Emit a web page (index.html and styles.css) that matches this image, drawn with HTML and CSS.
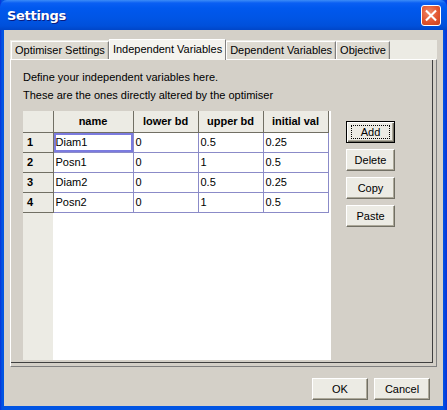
FILE: index.html
```html
<!DOCTYPE html>
<html>
<head>
<meta charset="utf-8">
<link rel="stylesheet" href="styles.css">
</head>
<body>
<div class="window">
  <div class="titlebar">
    <span class="title">Settings</span>
    <div class="close">
      <svg width="21" height="21" viewBox="0 0 21 21">
        <path d="M6 6 L15 15 M15 6 L6 15" stroke="#fff" stroke-width="2.2" stroke-linecap="square"/>
      </svg>
    </div>
  </div>
  <div class="client">
    <div class="tabctl">
      <div class="tabs">
        <div class="tab">Optimiser Settings</div>
        <div class="tab active">Independent Variables</div>
        <div class="tab">Dependent Variables</div>
        <div class="tab">Objective</div>
      </div>
      <div class="page">
        <div class="inner">
          <p class="line">Define your independent variables here.</p>
          <p class="line">These are the ones directly altered by the optimiser</p>
          <div class="content">
            <div class="grid">
              <table>
                <thead>
                  <tr><th class="corner"></th><th class="c-name">name</th><th class="c-num">lower bd</th><th class="c-num">upper bd</th><th class="c-num">initial val</th></tr>
                </thead>
                <tbody>
                  <tr><th>1</th><td class="sel">Diam1</td><td>0</td><td>0.5</td><td>0.25</td></tr>
                  <tr><th>2</th><td>Posn1</td><td>0</td><td>1</td><td>0.5</td></tr>
                  <tr><th>3</th><td>Diam2</td><td>0</td><td>0.5</td><td>0.25</td></tr>
                  <tr><th>4</th><td>Posn2</td><td>0</td><td>1</td><td>0.5</td></tr>
                </tbody>
              </table>
            </div>
            <div class="side">
              <button class="btn default"><span class="focus">Add</span></button>
              <button class="btn">Delete</button>
              <button class="btn">Copy</button>
              <button class="btn">Paste</button>
            </div>
          </div>
        </div>
      </div>
    </div>
    <div class="footer">
      <button class="btn wide">OK</button>
      <button class="btn wide">Cancel</button>
    </div>
  </div>
</div>
</body>
</html>
```

FILE: styles.css
```css
* { box-sizing: border-box; }
html, body { margin: 0; padding: 0; }
body {
  width: 447px;
  height: 410px;
  overflow: hidden;
  font-family: "Liberation Sans", Arial, sans-serif;
  font-size: 11px;
  color: #000;
}
.window {
  width: 447px;
  height: 410px;
  background: linear-gradient(to right, #0831d9 0, #0054e3 2px, #0054e3 443px, #0831d9 447px);
  display: flex;
  flex-direction: column;
}
.titlebar {
  height: 30px;
  flex: none;
  display: flex;
  align-items: center;
  justify-content: space-between;
  padding: 0 6px 0 7px;
  border-radius: 7px 7px 0 0;
  background: linear-gradient(to bottom, #3c8cf7 0, #0a5ff3 3px, #0058ee 8px, #0055e5 18px, #0050da 26px, #0046c8 30px);
}
.title {
  color: #fff;
  font-weight: bold;
  font-size: 13px;
  font-family: "DejaVu Sans", "Liberation Sans", sans-serif;
  letter-spacing: -0.3px;
  text-shadow: 1px 1px 0 #0a1c80;
  margin-top: 1px;
}
.close {
  width: 20px;
  height: 21px;
  border: 1px solid #fff;
  border-radius: 3px;
  background: radial-gradient(circle at 40% 35%, #f08a6a 0, #e2552f 55%, #c9401c 100%);
  display: flex;
  align-items: center;
  justify-content: center;
  margin-top: 1px;
}
.close svg { display: block; margin: -1px; }
.client {
  flex: 1;
  margin: 0 4px 4px 4px;
  background: #d4d0c8;
  display: flex;
  flex-direction: column;
}
.tabctl {
  margin: 8px 6px 0 6px;
  display: flex;
  flex-direction: column;
}
.tabs {
  display: flex;
  align-items: flex-end;
  height: 21px;
  padding-left: 1px;
  position: relative;
  z-index: 1;
  background: linear-gradient(to bottom, #d4d0c8 0 2px, #ecebe4 2px);
}
.tab {
  height: 18px;
  padding: 0 3px;
  line-height: 17px;
  background: #dedbd2;
  border-top: 1px solid #fff;
  border-left: 1px solid #fff;
  border-right: 1px solid #808080;
  box-shadow: inset -1px 0 0 #c8c4bb;
  white-space: nowrap;
}
.tab.active {
  height: 21px;
  line-height: 19px;
  background: #f4f3ee;
  margin-bottom: -1px;
  padding: 0 3px;
  box-shadow: none;
  border-right: 1px solid #808080;
}
.page {
  height: 308px;
  background: #d4d0c8;
  border-top: 1px solid #fff;
  border-left: 1px solid #fff;
  border-right: 1px solid #808080;
  border-bottom: 1px solid #808080;
  padding: 0 3px 3px 0;
}
.inner {
  height: 100%;
  border-right: 1px solid #404040;
  border-bottom: 1px solid #404040;
  padding: 8px 0 0 12px;
}
.line {
  margin: 0;
  height: 18px;
  line-height: 18px;
}
.content {
  display: flex;
  margin-top: 7px;
}
.grid {
  width: 308px;
  height: 249px;
  background: linear-gradient(to right, #ecebe4 0 30px, #fff 30px);
}
table {
  border-collapse: collapse;
  table-layout: fixed;
}
th, td {
  height: 20px;
  padding: 0 2px;
  white-space: nowrap;
  overflow: hidden;
}
thead th {
  background: #ecebe4;
  font-weight: bold;
  text-align: center;
  border-right: 1px solid #716f64;
  border-bottom: 1px solid #716f64;
  height: 21px;
}
tbody th {
  background: #ecebe4;
  font-weight: bold;
  text-align: left;
  padding-left: 4px;
  border-right: 1px solid #716f64;
  border-bottom: 1px solid #716f64;
}
th.corner { width: 30px; }
th.c-name { width: 80px; }
th.c-num { width: 65px; }
td {
  background: #fff;
  border-right: 1px solid #8b8bc8;
  border-bottom: 1px solid #8b8bc8;
}
td.sel {
  box-shadow: inset 0 0 0 2px #7b7bdf;
  border-right: 1px solid #8b8bc8;
}
.side {
  display: flex;
  flex-direction: column;
  gap: 6px;
  margin-left: 15px;
  padding-top: 10px;
}
.btn {
  font-family: inherit;
  font-size: 11px;
  color: #000;
  width: 49px;
  height: 22px;
  padding: 0;
  background: #ecebe4;
  border: 1px solid;
  border-color: #fff #716f64 #716f64 #fff;
  box-shadow: inset -1px -1px 0 #aca899;
}
.btn.default {
  border: 1px solid #000;
  box-shadow: inset 1px 1px 0 #fff, inset -1px -1px 0 #716f64, inset -2px -2px 0 #aca899;
  display: flex;
  align-items: center;
  justify-content: center;
}
.focus {
  display: block;
  border: 1px dotted #000;
  width: 39px;
  height: 14px;
  line-height: 12px;
}
.footer {
  display: flex;
  justify-content: flex-end;
  gap: 6px;
  padding: 11px 13px 0 0;
}
.btn.wide {
  width: 56px;
  height: 22px;
}
```
